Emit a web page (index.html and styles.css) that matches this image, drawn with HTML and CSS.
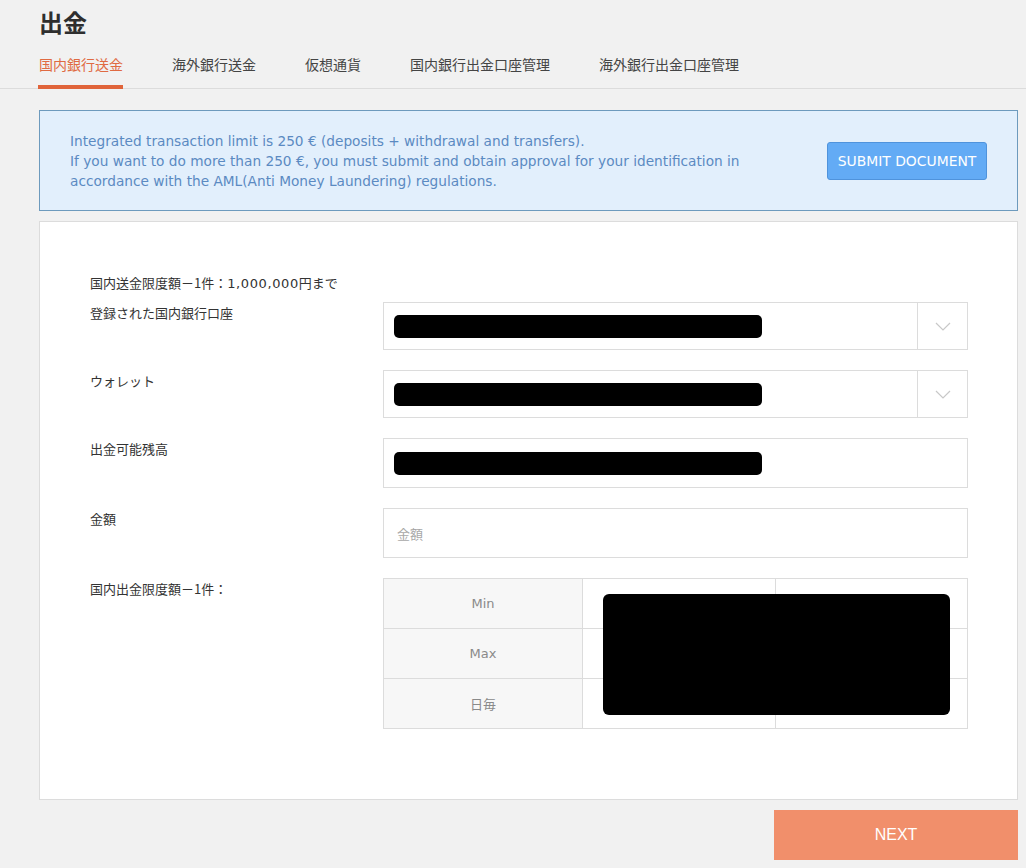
FILE: index.html
```html
<!DOCTYPE html>
<html lang="ja">
<head>
<meta charset="utf-8">
<title>出金</title>
<link rel="stylesheet" href="styles.css">
</head>
<body>
<header class="head">
  <h1 class="title">出金</h1>
  <nav class="tabs">
    <a class="tab active">国内銀行送金</a>
    <a class="tab">海外銀行送金</a>
    <a class="tab">仮想通貨</a>
    <a class="tab">国内銀行出金口座管理</a>
    <a class="tab">海外銀行出金口座管理</a>
  </nav>
</header>
<main class="main">
  <section class="alert">
    <p class="alert-text">Integrated transaction limit is 250 € (deposits + withdrawal and transfers).<br>If you want to do more than 250 €, you must submit and obtain approval for your identification in<br>accordance with the AML(Anti Money Laundering) regulations.</p>
    <button class="btn-doc">SUBMIT DOCUMENT</button>
  </section>
  <section class="card">
    <p class="note">国内送金限度額－1件：<span class="num">1,000,000</span>円まで</p>
    <div class="rows">
      <div class="row">
        <div class="label">登録された国内銀行口座</div>
        <div class="select">
          <div class="select-value"><span class="redact"></span></div>
          <div class="select-arrow"><svg width="16" height="9" viewBox="0 0 16 9"><path d="M1 1 L8 8 L15 1" fill="none" stroke="#c8c8c8" stroke-width="1.2"/></svg></div>
        </div>
      </div>
      <div class="row">
        <div class="label">ウォレット</div>
        <div class="select">
          <div class="select-value"><span class="redact"></span></div>
          <div class="select-arrow"><svg width="16" height="9" viewBox="0 0 16 9"><path d="M1 1 L8 8 L15 1" fill="none" stroke="#c8c8c8" stroke-width="1.2"/></svg></div>
        </div>
      </div>
      <div class="row">
        <div class="label">出金可能残高</div>
        <div class="input"><span class="redact"></span></div>
      </div>
      <div class="row">
        <div class="label">金額</div>
        <div class="input"><span class="placeholder">金額</span></div>
      </div>
      <div class="row">
        <div class="label">国内出金限度額－1件：</div>
        <div class="limits">
          <div class="limit-row"><div class="lc head-cell">Min</div><div class="lc"></div><div class="lc"></div></div>
          <div class="limit-row"><div class="lc head-cell">Max</div><div class="lc"></div><div class="lc"></div></div>
          <div class="limit-row"><div class="lc head-cell jp">日毎</div><div class="lc"></div><div class="lc"></div></div>
          <div class="limits-redact"></div>
        </div>
      </div>
    </div>
  </section>
  <div class="actions">
    <button class="btn-next">NEXT</button>
  </div>
</main>
</body>
</html>
```
FILE: styles.css
```css
* { box-sizing: border-box; }
html, body { margin: 0; padding: 0; }
body {
  background: #f1f1f1;
  color: #333;
  font-family: "Noto Sans CJK JP", "DejaVu Sans", sans-serif;
}
.head {
  border-bottom: 1px solid #dcdcdc;
}
.title {
  margin: 0;
  padding: 5px 0 0 39px;
  height: 53px;
  font-size: 24px;
  line-height: 34px;
  font-weight: 700;
  color: #2e2e2e;
}
.tabs {
  display: flex;
  gap: 49px;
  padding-left: 39px;
}
.tab {
  display: block;
  font-size: 14px;
  line-height: 20px;
  color: #444;
  padding: 1px 0 11px;
  border-bottom: 4px solid transparent;
  margin-bottom: -1px;
}
.tab.active {
  color: #e06a42;
  border-bottom-color: #e0643a;
  margin-left: -1px;
  padding-left: 1px;
}
.main {
  padding: 21px 8px 8px 39px;
}
.alert {
  display: flex;
  align-items: center;
  background: #e2effc;
  border: 1px solid #6d9abd;
  padding: 0 30px 0 30px;
  height: 101px;
}
.alert-text {
  flex: 1;
  margin: 0;
  font-family: "DejaVu Sans", sans-serif;
  font-size: 13.7px;
  line-height: 20px;
  color: #5b8ac2;
  white-space: nowrap;
}
.btn-doc {
  width: 160px;
  height: 38px;
  background: #63abf5;
  border: 1px solid #4f93dc;
  border-radius: 3px;
  color: #fff;
  font-family: "DejaVu Sans", sans-serif;
  font-size: 13.9px;
  padding: 0;
}
.card {
  margin-top: 10px;
  background: #fff;
  border: 1px solid #dcdcdc;
  padding: 51px 49px 70px 50px;
}
.note {
  margin: 0 0 9px;
  height: 20px;
  font-size: 13px;
  line-height: 20px;
  color: #333;
  overflow: visible;
}
.num {
  font-family: "DejaVu Sans", sans-serif;
  font-size: 13px;
  line-height: 1;
  letter-spacing: 0.6px;
}
.rows {
  display: flex;
  flex-direction: column;
  gap: 20px;
}
.row {
  display: grid;
  grid-template-columns: 293px 1fr;
}
.label {
  font-size: 13px;
  line-height: 20px;
  padding-top: 1px;
  color: #333;
}
.select {
  display: flex;
  height: 48px;
  border: 1px solid #dcdcdc;
}
.select-value {
  flex: 1;
  display: flex;
  align-items: center;
  padding-left: 10px;
}
.select-arrow {
  width: 50px;
  border-left: 1px solid #dcdcdc;
  display: flex;
  align-items: center;
  justify-content: center;
}
.redact {
  display: block;
  width: 368px;
  height: 23px;
  background: #000;
  border-radius: 5px;
}
.input {
  height: 50px;
  border: 1px solid #dcdcdc;
  display: flex;
  align-items: center;
  padding-left: 10px;
}
.placeholder {
  padding-left: 3px;
  font-size: 13px;
  color: #a8a8a8;
}
.limits {
  position: relative;
  border: 1px solid #dcdcdc;
  border-bottom: none;
}
.limit-row {
  display: grid;
  grid-template-columns: 198px 193px 1fr;
  height: 50px;
  border-bottom: 1px solid #dcdcdc;
}
.lc {
  border-left: 1px solid #dcdcdc;
}
.lc:first-child { border-left: none; }
.head-cell {
  background: #f7f7f7;
  display: flex;
  align-items: center;
  justify-content: center;
  font-family: "DejaVu Sans", sans-serif;
  font-size: 13px;
  color: #8a8a8a;
}
.head-cell.jp {
  font-family: "Noto Sans CJK JP", sans-serif;
  font-size: 13px;
}
.limits-redact {
  position: absolute;
  left: 219px;
  top: 15px;
  width: 347px;
  height: 121px;
  background: #000;
  border-radius: 6px;
}
.actions {
  display: flex;
  justify-content: flex-end;
  margin-top: 10px;
}
.btn-next {
  width: 244px;
  height: 50px;
  background: #f18f6b;
  border: none;
  color: #fff;
  font-family: "Liberation Sans", Arial, sans-serif;
  font-size: 16px;
  padding: 0;
}
```
